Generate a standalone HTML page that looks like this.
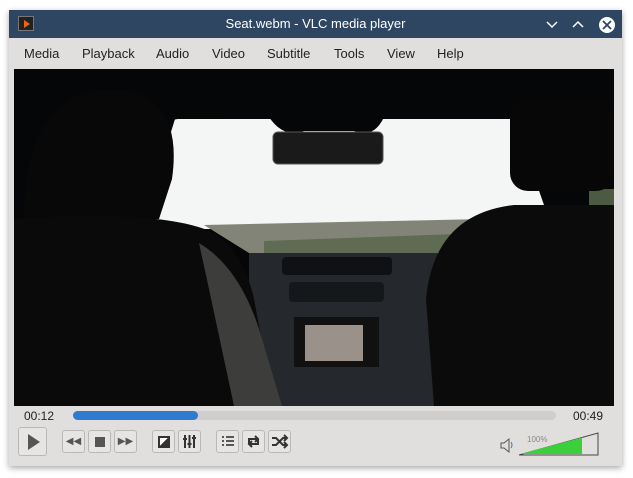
<!DOCTYPE html>
<html><head><style>
*{margin:0;padding:0;box-sizing:border-box}
body{width:633px;height:478px;background:#fff;font-family:"Liberation Sans","DejaVu Sans",sans-serif;position:relative;overflow:hidden}
.win{position:absolute;left:9px;top:10px;width:613px;height:456px;background:#e0dfde;box-shadow:0 2px 6px rgba(0,0,0,.35)}
.title{position:absolute;left:0;top:0;width:613px;height:28px;background:#2e4662;color:#fff;font-size:13px;text-align:center;line-height:28px}
.menu{position:absolute;top:28px;left:0;height:30px;font-size:13px;color:#222}
.menu span{position:absolute;top:8px;white-space:nowrap}
.video{position:absolute;left:5px;top:59px;width:600px;height:337px;background:#000}
.t{position:absolute;font-size:12px;color:#222}
.btn{position:absolute;border:1px solid #b9b8b6;border-radius:3px;background:#e6e5e4}
</style></head><body>
<div class="win">
 <div class="title">Seat.webm - VLC media player
  <div style="position:absolute;left:9px;top:6px;width:16px;height:15px;background:#222;border:1px solid #777"><div style="position:absolute;left:5px;top:3px;width:0;height:0;border-left:6px solid #e8661a;border-top:4px solid transparent;border-bottom:4px solid transparent"></div></div>
  <svg style="position:absolute;left:536px;top:7px" width="70" height="16"><path d="M2 5l5 5 5-5M28 10l5-5 5 5" stroke="#fff" stroke-width="1.5" fill="none"/><circle cx="62" cy="8" r="8" fill="#fff"/><path d="M58 4l8 8M66 4l-8 8" stroke="#2e4662" stroke-width="1.8"/></svg>
 </div>
 <div class="menu">
  <span style="left:15px">Media</span><span style="left:73px">Playback</span><span style="left:147px">Audio</span><span style="left:203px">Video</span><span style="left:258px">Subtitle</span><span style="left:325px">Tools</span><span style="left:378px">View</span><span style="left:428px">Help</span>
 </div>
 <div class="video">
  <svg width="600" height="337" viewBox="0 0 600 337">
   <rect width="600" height="337" fill="#050607"/>
   <polygon points="161,50 500,50 530,136 480,160 135,160 131,146" fill="#f4f5f5"/>
   <polygon points="190,156 470,150 470,184 235,184" fill="#838478"/>
   <polygon points="250,172 470,164 450,184 250,186" fill="#5f6b52"/>
   <rect x="0" y="112" width="40" height="35" fill="#55614c"/>
   <rect x="575" y="120" width="25" height="28" fill="#4c5a44"/>
   <path d="M0 0H600V55C560 45 520 50 500 48 L370 48 Q360 70 340 62 L290 62 Q270 70 255 48 L170 50 Q150 48 140 70 L132 150 L0 150Z" fill="#050607"/>
   <path d="M10 150 Q10 20 100 20 Q170 25 158 110 L145 150Z" fill="#080808"/>
   <rect x="496" y="30" width="104" height="92" rx="18" fill="#070707"/>
   <rect x="259" y="63" width="110" height="32" rx="5" fill="#1a1a1a" stroke="#555" stroke-width="1"/>
   <rect x="235" y="184" width="200" height="153" fill="#25292d"/>
   <rect x="268" y="188" width="110" height="18" rx="4" fill="#0f1114"/>
   <rect x="275" y="213" width="95" height="20" rx="4" fill="#15181b"/>
   <rect x="280" y="248" width="85" height="50" fill="#111"/>
   <rect x="291" y="256" width="58" height="36" fill="#9a918a"/>
   <path d="M0 150 Q150 140 200 164 Q230 184 240 230 L260 337 L0 337Z" fill="#0a0a0a"/>
   <path d="M185 174 Q225 198 245 260 L268 337 L220 337 L195 220Z" fill="#3d3d3b"/>
   <path d="M420 337 L412 230 Q420 145 500 136 L600 136 L600 337Z" fill="#0b0b0b"/>
  </svg>
 </div>
 <div class="t" style="left:15px;top:399px">00:12</div>
 <div style="position:absolute;left:64px;top:401px;width:483px;height:9px;border-radius:5px;background:#cfcecd"></div>
 <div style="position:absolute;left:64px;top:401px;width:125px;height:9px;border-radius:5px;background:#2f7bd0"></div>
 <div class="t" style="left:564px;top:399px">00:49</div>
 <div class="btn" style="left:9px;top:417px;width:29px;height:29px"><div style="position:absolute;left:9px;top:6px;border-left:12px solid #555;border-top:8px solid transparent;border-bottom:8px solid transparent"></div></div>
 <div class="btn" style="left:53px;top:420px;width:23px;height:23px;font-size:10px;color:#555;text-align:center;line-height:21px">◀◀</div>
 <div class="btn" style="left:79px;top:420px;width:23px;height:23px"><div style="position:absolute;left:6px;top:6px;width:10px;height:10px;background:#555"></div></div>
 <div class="btn" style="left:105px;top:420px;width:23px;height:23px;font-size:10px;color:#555;text-align:center;line-height:21px">▶▶</div>
 <div class="btn" style="left:143px;top:420px;width:23px;height:23px"><div style="position:absolute;left:5px;top:5px;width:12px;height:12px;border:2px solid #333;background:linear-gradient(135deg,#fff 50%,#333 50%)"></div></div>
 <div class="btn" style="left:169px;top:420px;width:23px;height:23px"><svg width="21" height="21"><path d="M6 4v13M10.5 4v13M15 4v13" stroke="#333" stroke-width="2"/><path d="M4 8h4M8.5 13h4M13 7h4" stroke="#333" stroke-width="2"/></svg></div>
 <div class="btn" style="left:207px;top:420px;width:23px;height:23px"><svg width="21" height="21"><path d="M5 6h2M5 10h2M5 14h2M9 6h8M9 10h8M9 14h8" stroke="#444" stroke-width="1.8"/></svg></div>
 <div class="btn" style="left:233px;top:420px;width:23px;height:23px"><svg width="21" height="21"><path d="M6 13V8h8M12 5l3 3-3 3M15 8v5H7M9 16l-3-3 3-3" stroke="#333" stroke-width="2" fill="none"/></svg></div>
 <div class="btn" style="left:259px;top:420px;width:23px;height:23px"><svg width="21" height="21"><path d="M3 7h4l7 7h4M3 14h4l7-7h4M15 4l3 3-3 3M15 11l3 3-3 3" stroke="#333" stroke-width="2" fill="none"/></svg></div>
 <div style="position:absolute;left:518px;top:425px;font-size:8px;color:#888">100%</div>
 <svg style="position:absolute;left:490px;top:422px" width="110" height="26"><path d="M2 11h3l5-4v13l-5-4H2z" fill="none" stroke="#555"/><path d="M12 10q2 3 0 6" stroke="#47a" fill="none"/><path d="M20 23 L99 1 V23Z" fill="none" stroke="#444"/><path d="M21 22 L83 5.5 V22Z" fill="#3ccf3c"/></svg>
</div>
</body></html>
